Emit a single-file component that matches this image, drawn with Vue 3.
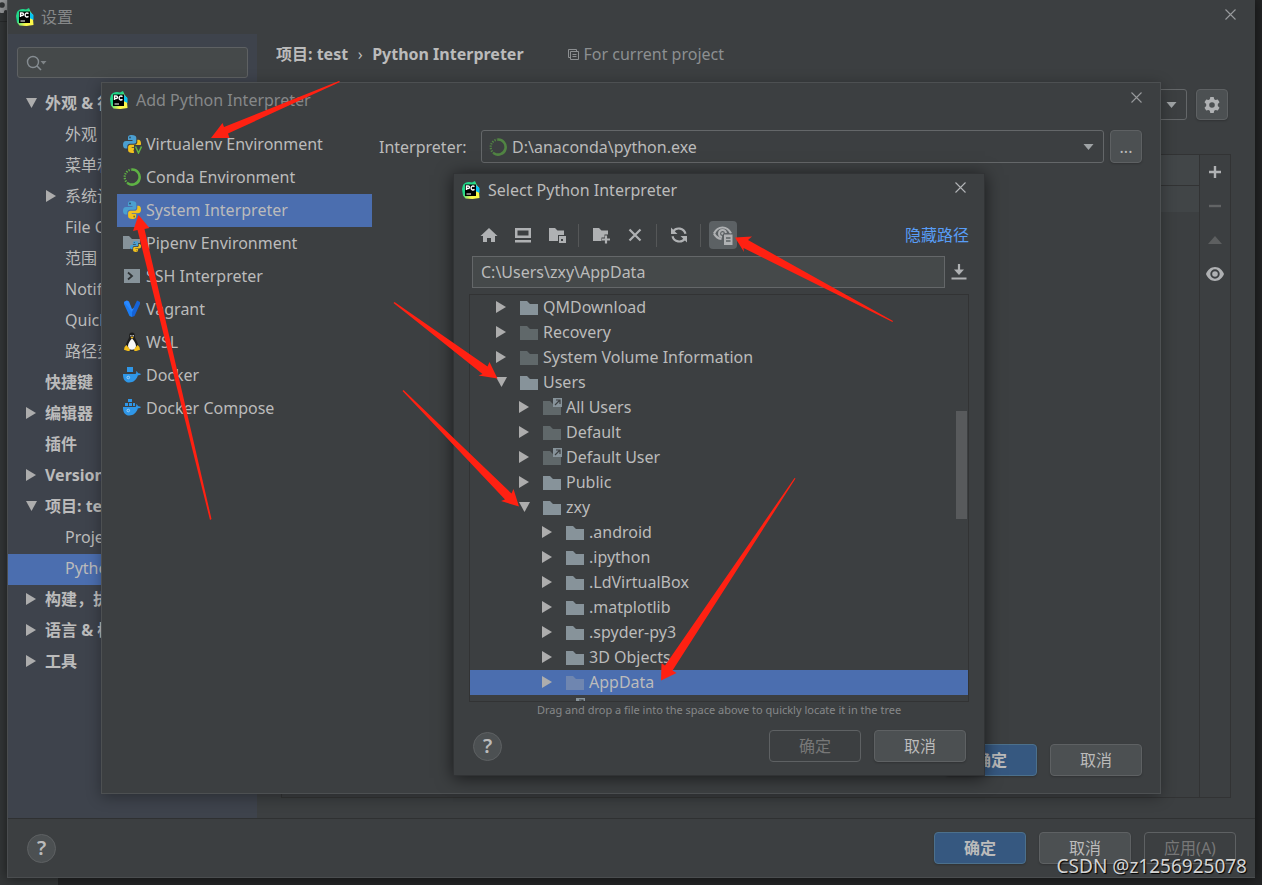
<script setup>
import { ref } from 'vue'

const tree = [
  { t: '外观 & 行为', arrow: 'down', bold: true },
  { t: '外观', sub: true },
  { t: '菜单和工具栏', sub: true },
  { t: '系统设置', sub: true, arrow: 'right' },
  { t: 'File Colors', sub: true },
  { t: '范围', sub: true },
  { t: 'Notifications', sub: true },
  { t: 'Quick Lists', sub: true },
  { t: '路径变量', sub: true },
  { t: '快捷键', bold: true },
  { t: '编辑器', arrow: 'right', bold: true },
  { t: '插件', bold: true },
  { t: 'Version Control', arrow: 'right', bold: true },
  { t: '项目: test', arrow: 'down', bold: true },
  { t: 'Project Structure', sub: true },
  { t: 'Python Interpreter', sub: true, selected: true },
  { t: '构建，执行，部署', arrow: 'right', bold: true },
  { t: '语言 & 框架', arrow: 'right', bold: true },
  { t: '工具', arrow: 'right', bold: true },
]

const envs = [
  { t: 'Virtualenv Environment', icon: 'venv' },
  { t: 'Conda Environment', icon: 'conda' },
  { t: 'System Interpreter', icon: 'python', selected: true },
  { t: 'Pipenv Environment', icon: 'pipenv' },
  { t: 'SSH Interpreter', icon: 'ssh' },
  { t: 'Vagrant', icon: 'vagrant' },
  { t: 'WSL', icon: 'wsl' },
  { t: 'Docker', icon: 'docker' },
  { t: 'Docker Compose', icon: 'compose' },
]

const files = [
  { t: 'QMDownload', d: 1 },
  { t: 'Recovery', d: 1, dim: true },
  { t: 'System Volume Information', d: 1, dim: true },
  { t: 'Users', d: 1, open: true },
  { t: 'All Users', d: 2, dim: true, link: true },
  { t: 'Default', d: 2, dim: true },
  { t: 'Default User', d: 2, dim: true, link: true },
  { t: 'Public', d: 2 },
  { t: 'zxy', d: 2, open: true },
  { t: '.android', d: 3 },
  { t: '.ipython', d: 3 },
  { t: '.LdVirtualBox', d: 3 },
  { t: '.matplotlib', d: 3 },
  { t: '.spyder-py3', d: 3 },
  { t: '3D Objects', d: 3 },
  { t: 'AppData', d: 3, dim: true, selected: true },
  { t: 'Application Data', d: 3, dim: true, link: true },
]

const query = ref('')
const path = ref('C:\\Users\\zxy\\AppData')
</script>

<template>
  <div class="desktop">
    <svg class="defs" width="0" height="0" aria-hidden="true">
      <defs>
        <linearGradient id="pcg" x1="0" y1="0" x2="1" y2="1">
          <stop offset="0.4" stop-color="#21d789" />
          <stop offset="0.72" stop-color="#fcf84a" />
        </linearGradient>
        <symbol id="pycharm" viewBox="0 0 18 18">
          <path d="M1 4Q3 1 7 1l3 .5L13 0l1.500 3.500L17 7v4l.5 6-7 1-7-.5-2.500-3L0 8z" fill="url(#pcg)" />
          <path d="M13.500 3.500L17.500 7v5l-4-2z" fill="#07c3f2" />
          <path d="M3 3.500h11v11.500H3z" fill="#000" />
          <path d="M4.500 9V5h1.700a1.200 1.200 0 0 1 0 2.500H4.500M12.500 5.600c-1.500-1.200-3.400-.4-3.400 1.400s1.900 2.600 3.400 1.400" fill="none" stroke="#fff" stroke-width="1.400" />
          <path d="M4.500 13h4.500" stroke="#fff" stroke-width="1" />
        </symbol>
        <symbol id="python" viewBox="0 0 18 18">
          <path d="M8.800 0C5.500 0 5 1.300 5 2.700V5h4.500v1H3C1 6 0 7.500 0 9.800s1 3.700 2.600 3.700h1.700v-2.200c0-1.500 1.200-2.600 2.700-2.600h4c1.400 0 2.300-1 2.300-2.300V2.700C13.300.9 11.500 0 8.800 0z" fill="#4b9fd0" />
          <path d="M9.200 18c3.300 0 4-1.300 4-2.700V13H8.700v-.8H15c2 0 3-1.500 3-3.700s-1-3.700-2.600-3.700h-1.100v2.400c0 1.500-1.200 2.600-2.700 2.600H7.400c-1.400 0-2.300 1-2.300 2.300v3.200c0 1.800 1.600 2.700 4.100 2.700z" fill="#f2c11d" />
          <circle cx="7" cy="2.500" r=".9" fill="#2f4f66" />
          <circle cx="11.200" cy="15.500" r=".9" fill="#7a6a26" />
        </symbol>
        <symbol id="conda" viewBox="0 0 18 18">
          <path d="M8.500 1.600A7.500 7.500 0 1 1 4.800 15.200" fill="none" stroke="#5fb245" stroke-width="2.600" />
          <path d="M5 15.300A7.500 7.500 0 0 1 8.500 1.600" fill="none" stroke="#5fb245" stroke-width="2.200" stroke-dasharray="1.300 1.200" />
        </symbol>
        <symbol id="folder" viewBox="0 0 18 14">
          <path d="M0 0h7l3 3h8v11H0z" fill="currentColor" />
        </symbol>
        <symbol id="linkbadge" viewBox="0 0 9 9">
          <path d="M0 0h9v9H0z" fill="#87939a" />
          <path d="M2 7l4.500-4.500M3 2h4v4" fill="none" stroke="#3c3f41" stroke-width="1.200" />
        </symbol>
        <symbol id="whale" viewBox="0 0 18 12">
          <path d="M0 3h12.500c.8-.6 1-1.700.6-3 1.200.6 1.700 1.400 1.800 2.200 1.100-.2 2.200 0 3.100.7-.7 1-1.700 1.400-3.100 1.400C13.500 9 10.500 11.500 6.200 11.500 2 11.500-.2 8 0 3z" fill="#2f97e8" />
          <circle cx="5.300" cy="6.500" r="1.300" fill="none" stroke="#b5dcf8" stroke-width=".8" />
        </symbol>
        <symbol id="gear" viewBox="0 0 16 16">
          <path fill-rule="evenodd" d="M6.300 0h3.400l.5 2.300 1.300.8 2.300-.7 1.700 2.900-1.700 1.600v2.200l1.700 1.600-1.700 2.900-2.300-.7-1.300.8L9.700 16H6.300l-.5-2.300-1.300-.8-2.300.7-1.700-2.900 1.700-1.600V6.900L.5 5.300l1.700-2.900 2.300.7 1.300-.8zM8 5.200a2.800 2.800 0 1 0 0 5.600 2.800 2.800 0 0 0 0-5.600z" fill="currentColor" />
        </symbol>
        <symbol id="tri-right" viewBox="0 0 12 12"><path d="M1 0l10 6-10 6z" fill="#adadad" /></symbol>
        <symbol id="tri-down" viewBox="0 0 12 12"><path d="M1 1h11L6.500 11z" fill="#adadad" /></symbol>
        <symbol id="combo-tri" viewBox="0 0 10 6"><path d="M0 0h10L5 6z" fill="#9fa3a5" /></symbol>
        <symbol id="close" viewBox="0 0 11 11"><path d="M.5.5l10 10M10.500.5l-10 10" stroke="currentColor" stroke-width="1.100" /></symbol>
      </defs>
    </svg>

    <div class="backdrop-left">
      <svg class="backdrop-gear" width="16" height="16"><use href="#gear" /></svg>
    </div>
    <div class="backdrop-bottom"></div>

    <section class="window settings">
      <header class="titlebar">
        <svg width="18" height="18"><use href="#pycharm" /></svg>
        <h1>设置</h1>
        <button class="close" aria-label="关闭"><svg width="11" height="11"><use href="#close" /></svg></button>
      </header>
      <div class="settings-body">
        <aside class="sidebar">
          <label class="search">
            <svg width="22" height="16" viewBox="0 0 22 16">
              <circle cx="7" cy="7" r="5.500" fill="none" stroke="#868d92" stroke-width="1.400" />
              <path d="M11 11l4 4" stroke="#868d92" stroke-width="1.600" />
              <path d="M14.500 6h6l-3 3.500z" fill="#7f8487" />
            </svg>
            <input v-model="query" type="text" aria-label="搜索设置" />
          </label>
          <ul class="nav">
            <li v-for="n in tree" :key="n.t" :class="{ sub: n.sub, bold: n.bold, selected: n.selected }">
              <span class="tw"><svg v-if="n.arrow" width="12" height="12"><use :href="'#tri-' + n.arrow" /></svg></span>
              <span>{{ n.t }}</span>
            </li>
          </ul>
        </aside>
        <main class="content">
          <div class="crumbs">
            <b>项目: test</b><span class="chev">›</span><b>Python Interpreter</b>
            <span class="scope">
              <svg width="11" height="11" viewBox="0 0 11 11" fill="none" stroke="#8c8f91"><path d="M2.500 8.500h-2v-8h8v2M2.500 2.500h8v8h-8zM4.500 5.500h4M4.500 7.500h4" /></svg>
              For current project
            </span>
          </div>
          <div class="interp-row">
            <button class="combo-main" aria-label="Python Interpreter"><svg width="11" height="6"><use href="#combo-tri" /></svg></button>
            <button class="btn gearbtn" aria-label="设置"><svg width="16" height="16"><use href="#gear" /></svg></button>
          </div>
          <div class="packages">
            <div class="pkg-table"><div class="pkg-head"></div><div class="pkg-row"></div></div>
            <div class="pkg-tools">
              <button aria-label="添加"><svg width="14" height="14" viewBox="0 0 14 14"><path d="M7 1v12M1 7h12" stroke="#afb1b3" stroke-width="2.400" /></svg></button>
              <button aria-label="移除" disabled><svg width="14" height="14" viewBox="0 0 14 14"><path d="M1 7h12" stroke="#626465" stroke-width="2.400" /></svg></button>
              <button aria-label="升级" disabled><svg width="14" height="8" viewBox="0 0 14 8"><path d="M0 8l7-8 7 8z" fill="#5d5f60" /></svg></button>
              <button aria-label="显示">
                <svg width="18" height="14" viewBox="0 0 18 14"><path fill-rule="evenodd" d="M9 0c4 0 7.500 2.800 9 7-1.500 4.200-5 7-9 7S1.500 11.200 0 7c1.500-4.200 5-7 9-7zm0 2.300a4.700 4.700 0 1 0 0 9.400 4.700 4.700 0 0 0 0-9.400z" fill="#afb1b3" /><circle cx="9" cy="7" r="2.800" fill="#afb1b3" /></svg>
              </button>
            </div>
          </div>
        </main>
      </div>
      <footer class="settings-foot">
        <button class="help">?</button>
        <div class="actions">
          <button class="btn primary">确定</button>
          <button class="btn">取消</button>
          <button class="btn" disabled>应用(A)</button>
        </div>
      </footer>
    </section>

    <section class="window add">
      <header class="titlebar">
        <svg width="18" height="18"><use href="#pycharm" /></svg>
        <h2>Add Python Interpreter</h2>
        <button class="close" aria-label="关闭"><svg width="11" height="11"><use href="#close" /></svg></button>
      </header>
      <div class="add-body">
        <ul class="envs">
          <li v-for="e in envs" :key="e.t" :class="{ selected: e.selected }">
            <svg width="20" height="20" viewBox="0 0 20 20">
              <template v-if="e.icon === 'venv'">
                <use href="#python" x="0" y="1" width="18" height="18" />
                <path d="M11 11h9v9h-9z" fill="#3c3f41" />
                <path d="M12.500 12.500l3 6.500 3-6.500" fill="none" stroke="#62b543" stroke-width="1.500" />
              </template>
              <use v-else-if="e.icon === 'conda'" href="#conda" x="0" y="1" width="18" height="18" />
              <use v-else-if="e.icon === 'python'" href="#python" x="0" y="1" width="18" height="18" />
              <template v-else-if="e.icon === 'pipenv'">
                <path d="M0 3h6l3 3h8v4h-6l-4 6H0z" fill="#87939a" />
                <use href="#python" x="7" y="8" width="11" height="11" />
              </template>
              <template v-else-if="e.icon === 'ssh'">
                <path d="M1 3h16v14H1z" fill="#87939a" />
                <path d="M5 6.500l4 3.500-4 3.500" fill="none" stroke="#2f3335" stroke-width="1.800" />
              </template>
              <template v-else-if="e.icon === 'vagrant'">
                <path d="M1 3l3-1.500L9 12v6l-2.500-1L1 5z" fill="#1c7ef5" />
                <path d="M17 3l-3-1.500L9 12v6l2.500-1L17 5z" fill="#1563d8" />
                <path d="M1 3l3-1.500 2 1L9 10l2-1-2 4-3-4z" fill="#2a89ff" />
              </template>
              <template v-else-if="e.icon === 'wsl'">
                <path d="M9 .5c-2.200 0-3 1.500-2.800 3.500.2 2.500-2.700 5.200-3.200 9 0 3 2 5.500 6 5.500s6-2.500 6-5.500c-.5-3.800-3.400-6.500-3.200-9C12 2 11.200.500 9 .500z" fill="#1d1d1d" />
                <path d="M9 6.500c-1.800 1.500-4 5-4 7.500 0 2 1.500 3.800 4 3.800s4-1.800 4-3.800c0-2.500-2.200-6-4-7.500z" fill="#f7f7f7" />
                <circle cx="7.900" cy="3.800" r=".8" fill="#ddd" /><circle cx="10.200" cy="3.800" r=".8" fill="#ddd" />
                <path d="M7.500 5.300L9 4.500l1.600.8L9 6.800z" fill="#f2b91d" />
                <path d="M3.500 13l3.500 4.500c0 1.500-1.500 1.800-3 1.200l-3-1 .6-2.700zM14.500 13L11 17.500c0 1.500 1.500 1.800 3 1.200l3-1-.6-2.700z" fill="#f4bf1b" />
              </template>
              <template v-else-if="e.icon === 'docker'">
                <path d="M4 2h6v5H4z" fill="#2f97e8" />
                <use href="#whale" x="0" y="6" width="18" height="12" />
              </template>
              <template v-else>
                <path d="M5 1h4v3H5zM2 5h3v3H2zM6 5h3v3H6zM10 5h2v3h-2z" fill="#2f97e8" />
                <use href="#whale" x="0" y="6" width="18" height="12" />
              </template>
            </svg>
            <span>{{ e.t }}</span>
          </li>
        </ul>
        <div class="add-main">
          <div class="field">
            <span id="interp-label" class="lbl">Interpreter:</span>
            <button class="combo" aria-labelledby="interp-label">
              <svg class="faded" width="18" height="18"><use href="#conda" /></svg>
              <span>D:\anaconda\python.exe</span>
              <svg class="end" width="11" height="6"><use href="#combo-tri" /></svg>
            </button>
            <button class="btn more">...</button>
          </div>
          <div class="actions">
            <button class="btn primary">确定</button>
            <button class="btn">取消</button>
          </div>
        </div>
      </div>
    </section>

    <section class="window select">
      <header class="titlebar">
        <svg width="18" height="18"><use href="#pycharm" /></svg>
        <h2>Select Python Interpreter</h2>
        <button class="close" aria-label="关闭"><svg width="11" height="11"><use href="#close" /></svg></button>
      </header>
      <div class="toolbar">
        <button aria-label="主目录"><svg width="18" height="18" viewBox="0 0 18 18"><path d="M9 2l8.500 8H15v6h-4v-4H7v4H3v-6H.5z" fill="#afb1b3" /></svg></button>
        <button aria-label="桌面"><svg width="18" height="18" viewBox="0 0 18 18"><path fill-rule="evenodd" d="M1 2h16v10H1zm2.500 2.500v5h11v-5zM1 14h16v2.500H1z" fill="#afb1b3" /></svg></button>
        <button aria-label="项目目录"><svg width="18" height="18" viewBox="0 0 18 18"><path d="M1 2h6l2.500 2.500H16V9h-6v6H1z" fill="#afb1b3" /><path fill-rule="evenodd" d="M11 10h7v7h-7zm2 3v2h2v-2z" fill="#afb1b3" /></svg></button>
        <i></i>
        <button aria-label="新建文件夹"><svg width="18" height="18" viewBox="0 0 18 18"><path d="M1 2h6l2.500 2.500H16V8.500h-3.500v3H9.500V15H1z" fill="#afb1b3" /><path d="M14 9.500v8M10 13.500h8" stroke="#afb1b3" stroke-width="2.200" /></svg></button>
        <button aria-label="删除"><svg width="18" height="18" viewBox="0 0 18 18"><path d="M3.500 3.500l11 11M14.500 3.500l-11 11" stroke="#afb1b3" stroke-width="2.200" /></svg></button>
        <i></i>
        <button aria-label="刷新"><svg width="18" height="18" viewBox="0 0 18 18"><path d="M3 5.500a7 7 0 0 1 12.500 2.200M15 12.500A7 7 0 0 1 2.500 10.300" fill="none" stroke="#afb1b3" stroke-width="2.200" /><path d="M1 1.500v6.500h6.500zM17 16.500V10h-6.500z" fill="#afb1b3" /></svg></button>
        <i></i>
        <button class="on" aria-label="显示隐藏文件">
          <svg width="20" height="20" viewBox="0 0 20 20"><path d="M1 8.500C2.700 5 5.800 2.500 9.500 2.500S16.300 5 18 8.500M1 8.500c1.500 3 4 5 7.500 5.500" fill="none" stroke="#afb1b3" stroke-width="2.200" /><path d="M9 12a3.500 3.500 0 1 1 4-4" fill="none" stroke="#afb1b3" stroke-width="2" /><circle cx="9.500" cy="8.500" r="1.300" fill="#afb1b3" /><path d="M10 8.500h10v11.500H10z" fill="#5c6164" /><path d="M11 9.500h8.500V20H11z" fill="#afb1b3" /><path d="M13 13h4.500M13 16h4.500" stroke="#5c6164" stroke-width="1.300" /></svg>
        </button>
        <a href="#">隐藏路径</a>
      </div>
      <div class="pathrow">
        <input v-model="path" type="text" aria-label="路径" />
        <button aria-label="历史"><svg width="16" height="16" viewBox="0 0 16 16"><path d="M8 0v8M.500 14.500h15" stroke="#afb1b3" stroke-width="2.200" /><path d="M3 5.500h10L8 11z" fill="#afb1b3" /></svg></button>
      </div>
      <div class="files">
        <ul>
          <li v-for="f in files" :key="f.t" :class="['d' + f.d, { dim: f.dim, selected: f.selected }]">
            <svg width="12" height="12"><use :href="f.open ? '#tri-down' : '#tri-right'" /></svg>
            <svg class="fold" width="18" height="18" viewBox="0 0 18 18">
              <use href="#folder" x="0" y="3" width="18" height="14" />
              <use v-if="f.link" href="#linkbadge" x="10" y="0" width="9" height="9" />
            </svg>
            <span>{{ f.t }}</span>
          </li>
        </ul>
        <div class="thumb"></div>
      </div>
      <p class="hint">Drag and drop a file into the space above to quickly locate it in the tree</p>
      <footer class="select-foot">
        <button class="help">?</button>
        <div class="actions">
          <button class="btn" disabled>确定</button>
          <button class="btn">取消</button>
        </div>
      </footer>
    </section>

    <svg class="arrows" width="1262" height="885" viewBox="0 0 1262 885" fill="#ff2112" aria-hidden="true">
      <path d="M211 138l11.500-15 1.500 4L339 81l1 1L228 133.500l1.500 4.500z" />
      <path d="M138.500 215l11 13-5 1L211.500 519l-1.500 1L137.500 230l-4.500 1z" />
      <path d="M735 237.500l17-1-4 3.500L893 321l-.5 1L743.500 248l.5 4z" />
      <path d="M497.500 378.500L489.500 362l-2 4.500L394.500 302l-1 1L482.500 374l-4 1.500z" />
      <path d="M519 506.500L513.500 489l-2 4.500L403.500 390l-1 1L505 499.500l-4 1.500z" />
      <path d="M661 680.500l.5-17.500 3.500 2.500L794.500 478l1 .5L672.500 670.500l4 2.500z" />
    </svg>
    <div class="watermark">CSDN @z1256925078</div>
  </div>
</template>

<style>
body { background: #232425; overflow: hidden; }
</style>

<style scoped>
* { box-sizing: border-box; }
.desktop {
  position: relative;
  height: 100vh;
  background: #232425;
  color: #bbbbbb;
  font-family: "Noto Sans", "Noto Sans CJK SC", sans-serif;
  font-size: 16px;
  line-height: 24px;
  overflow: hidden;
}
.defs { position: absolute; }
ul { list-style: none; margin: 0; padding: 0; }
li { white-space: nowrap; }
h1, h2, p { margin: 0; font-size: 16px; font-weight: 400; }
svg { display: block; flex: none; }
button, input { font: inherit; color: inherit; }
button { background: none; border: 0; padding: 0; display: flex; align-items: center; justify-content: center; flex: none; }
.backdrop-left { position: absolute; left: 0; top: 0; bottom: 0; width: 8px; background: #343738; overflow: hidden; }
.backdrop-left::after { content: ""; display: block; height: 1px; margin-top: 21px; background: #292b2c; }
.backdrop-gear { position: absolute; left: -6px; top: -3px; color: #9a9c9e; }
.backdrop-bottom { position: absolute; left: 0; bottom: 0; width: 58px; height: 8px; background: #343738; }

.window { position: absolute; display: flex; flex-direction: column; background: #3c3f41; }
.settings { left: 7px; right: 7px; top: 0; bottom: 7px; border: 1px solid #4a4d4f; border-top: 0; border-right: 0; box-shadow: 0 0 12px #0008; }
.titlebar { display: flex; align-items: center; gap: 8px; flex: none; }
.titlebar h1, .titlebar h2 { color: #868889; }
.close { margin-left: auto; width: 32px; height: 28px; color: #999b9d; }
.settings .titlebar { height: 34px; gap: 7px; padding: 0 9px 0 8px; }
.settings .close { margin-bottom: 6px; }
.settings-body { flex: 1; display: flex; min-height: 0; }
.sidebar { width: 249px; flex: none; background: #3e434c; padding-top: 13px; overflow: hidden; }
.search { display: flex; align-items: center; height: 31px; margin: 0 9px 11px; padding-left: 8px; border: 1px solid #5e6163; border-radius: 3px; background: #45494a; }
.search input { flex: 1; min-width: 0; border: 0; background: none; outline: 0; }
.nav li { display: flex; align-items: center; height: 31px; padding: 0 0 3px 17px; }
.nav li.sub { padding-left: 37px; }
.nav li.bold { font-weight: 700; }
.tw { width: 20px; flex: none; }
.selected { background: #4b6eaf; }
.content { flex: 1; min-width: 0; display: flex; flex-direction: column; padding: 8px 24px 20px 24px; }
.crumbs { display: flex; align-items: center; margin-left: -5px; }
.crumbs b { font-weight: 700; }
.chev { width: 24px; text-align: center; }
.scope { display: flex; align-items: center; gap: 5px; margin-left: 44px; color: #8c8f91; }
.interp-row { display: flex; justify-content: flex-end; gap: 9px; margin: 23px 3px 0 0; }
.combo-main { width: 500px; height: 31px; border: 1px solid #646769; border-radius: 3px; justify-content: flex-end; padding-right: 9px; }
.btn { width: 92px; height: 32px; border: 1px solid #5e6163; border-radius: 4px; background: #4c5052; box-shadow: 0 1px 2px #0003; }
.btn.gearbtn { width: 32px; height: 31px; color: #afb1b3; }
.packages { flex: 1; display: flex; margin-top: 34px; border: 1px solid #323334; }
.pkg-table { flex: 1; border-right: 1px solid #323334; }
.pkg-head { height: 31px; background: #424648; border-bottom: 1px solid #323334; }
.pkg-row { height: 26px; background: #414547; }
.pkg-tools { width: 30px; }
.pkg-tools button { width: 30px; height: 34px; }
.settings-foot { display: flex; justify-content: space-between; align-items: center; flex: none; height: 59px; border-top: 1px solid #2f3132; padding: 0 19px; }
.actions { display: flex; gap: 13px; }
.btn.primary { background: #365880; border-color: #4c708c; font-weight: 600; }
.btn:disabled { background: none; color: #777777; box-shadow: none; }
.help { width: 29px; height: 29px; border: 1px solid #5e6163; border-radius: 50%; background: #4c5052; font-size: 20px; font-weight: 600; }

.add { left: 101px; right: 101px; top: 82px; bottom: 91px; border: 1px solid #4d5052; box-shadow: 0 3px 14px #0005; }
.add .titlebar { height: 34px; padding: 0 8px; }
.add .close { margin-bottom: 6px; }
.add-body { flex: 1; display: flex; padding: 11px 18px 17px 15px; }
.envs { width: 255px; flex: none; }
.envs li { display: flex; align-items: center; gap: 3px; height: 33px; padding: 0 0 2px 6px; }
.add-main { flex: 1; display: flex; flex-direction: column; justify-content: space-between; padding-left: 7px; }
.field { display: flex; align-items: center; padding-top: 2px; }
.lbl { width: 102px; flex: none; }
.combo { flex: 1; height: 33px; border: 1px solid #646769; border-radius: 3px; justify-content: flex-start; gap: 5px; padding: 0 9px 0 7px; }
.combo .end { margin-left: auto; }
.faded { opacity: 0.6; }
.btn.more { width: 32px; height: 33px; margin-left: 6px; }
.add-main .actions { justify-content: flex-end; }

.select { left: 453px; width: 532px; top: 173px; border: 1px solid #313335; box-shadow: 0 2px 16px #0009; }
.select .titlebar { height: 32px; padding: 0 8px; }
.select .titlebar h2 { color: #bbbbbb; }
.select .close { margin-bottom: 6px; color: #b4b6b8; }
.toolbar { display: flex; align-items: center; height: 28px; margin-top: 15px; padding: 0 15px 0 21px; }
.toolbar button { width: 28px; height: 28px; margin-right: 6px; border-radius: 4px; }
.toolbar i { width: 1px; height: 23px; margin: 0 8px 0 1px; background: #555758; }
.toolbar .on { background: #5c6164; }
.toolbar a { margin-left: auto; color: #589df6; text-decoration: none; }
.pathrow { display: flex; align-items: center; margin: 7px 17px 0 18px; }
.pathrow input { flex: 1; min-width: 0; height: 32px; border: 1px solid #646769; background: #45494a; padding: 0 8px; outline: 0; }
.pathrow button { width: 28px; height: 28px; margin-right: -6px; }
.files { position: relative; height: 408px; margin: 6px 15px 0; border: 1px solid #323334; overflow: hidden; }
.files li { display: flex; align-items: center; height: 25px; padding-bottom: 2px; }
.files li span { padding-left: 5px; }
.d1 { padding-left: 25px; }
.d2 { padding-left: 48px; }
.d3 { padding-left: 71px; }
.fold { margin-left: 13px; color: #87939a; overflow: visible; }
.dim .fold { color: #60686a; }
.dim.selected .fold { color: #6f86b0; }
.thumb { position: absolute; right: 1px; top: 116px; width: 11px; height: 108px; background: #585a5c; }
.hint { font-size: 11px; line-height: 16px; color: #868889; text-align: center; }
.select-foot { display: flex; justify-content: space-between; align-items: center; padding: 12px 18px 13px 19px; }

.arrows { position: absolute; left: 0; top: 0; }
.watermark { position: absolute; right: 15px; bottom: 6px; font-size: 19px; line-height: 26px; color: #d4d4d4; text-shadow: 1px 1px 1px #000; }
</style>
